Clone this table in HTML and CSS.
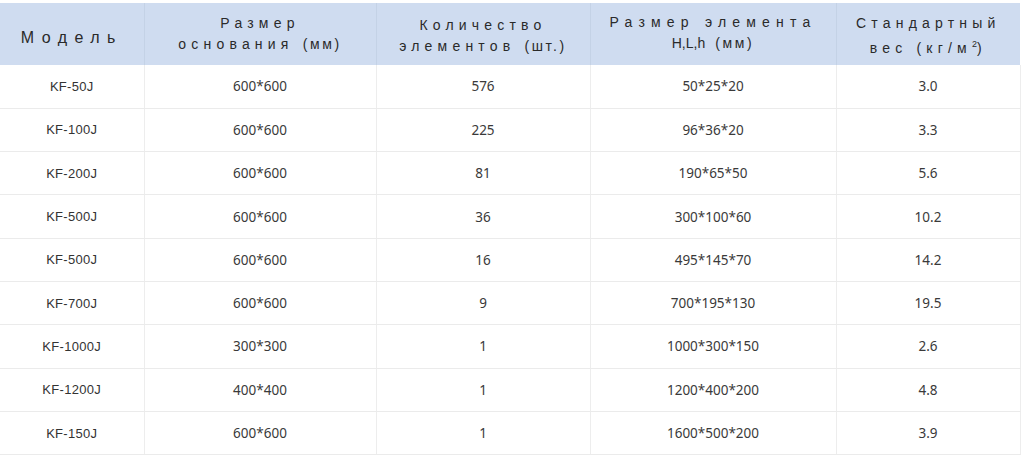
FILE: index.html
```html
<!DOCTYPE html>
<html lang="ru">
<head>
<meta charset="utf-8">
<link rel="stylesheet" href="styles.css">
</head>
<body>
<table class="spec">
  <colgroup>
    <col class="c1"><col class="c2"><col class="c3"><col class="c4"><col class="c5">
  </colgroup>
  <thead>
    <tr>
      <th class="h-model">Модель</th>
      <th>Размер<br>основания <span class="unit">(мм)</span></th>
      <th class="h-low">Количество<br>элементов <span class="unit">(шт.)</span></th>
      <th class="h-high">Размер элемента<br><span class="latin">H,L,h</span> <span class="unit">(мм)</span></th>
      <th class="h-low">Стандартный<br>вес (кг/м<sup>2</sup>)</th>
    </tr>
  </thead>
  <tbody>
    <tr><td class="model">KF-50J</td><td>600*600</td><td>576</td><td>50*25*20</td><td>3.0</td></tr>
    <tr><td class="model">KF-100J</td><td>600*600</td><td>225</td><td>96*36*20</td><td>3.3</td></tr>
    <tr><td class="model">KF-200J</td><td>600*600</td><td>81</td><td>190*65*50</td><td>5.6</td></tr>
    <tr><td class="model">KF-500J</td><td>600*600</td><td>36</td><td>300*100*60</td><td>10.2</td></tr>
    <tr><td class="model">KF-500J</td><td>600*600</td><td>16</td><td>495*145*70</td><td>14.2</td></tr>
    <tr><td class="model">KF-700J</td><td>600*600</td><td>9</td><td>700*195*130</td><td>19.5</td></tr>
    <tr><td class="model">KF-1000J</td><td>300*300</td><td>1</td><td>1000*300*150</td><td>2.6</td></tr>
    <tr><td class="model">KF-1200J</td><td>400*400</td><td>1</td><td>1200*400*200</td><td>4.8</td></tr>
    <tr><td class="model">KF-150J</td><td>600*600</td><td>1</td><td>1600*500*200</td><td>3.9</td></tr>
  </tbody>
</table>
</body>
</html>
```
FILE: styles.css
```css
html, body {
  margin: 0;
  padding: 0;
  background: #ffffff;
}
body {
  padding-top: 3px;
  font-family: "Noto Sans", "Open Sans", sans-serif;
}
.spec {
  width: 1020px;
  border-collapse: collapse;
  table-layout: fixed;
}
.c1 { width: 144px; }
.c2 { width: 232px; }
.c3 { width: 214px; }
.c4 { width: 246px; }
.c5 { width: 184px; }

.spec th {
  box-sizing: border-box;
  background: #cfdcf0;
  height: 62px;
  padding: 0;
  font-weight: 400;
  font-size: 14px;
  line-height: 21px;
  letter-spacing: 5.2px;
  color: #2a2a2a;
  text-align: center;
  vertical-align: middle;
  border-left: 1px solid #c4d2e6;
  font-family: "Liberation Sans", "Noto Sans", sans-serif;
}
.spec th:first-child { border-left: none; }
.spec th.h-model { font-size: 16px; letter-spacing: 7.4px; padding-top: 6px; }
.spec th.h-low { padding-top: 4px; }
.spec th.h-high { padding-bottom: 2px; letter-spacing: 6.2px; }
.spec th .latin { letter-spacing: 0; }
.spec th .unit { letter-spacing: 2.6px; }
.spec th sup { font-size: 9px; letter-spacing: 0; }

.spec td {
  box-sizing: border-box;
  height: 43.3px;
  padding: 0;
  font-size: 13.5px;
  color: #3a3a3a;
  text-align: center;
  vertical-align: middle;
  border-left: 1px solid #ededed;
  border-bottom: 1px solid #ebebeb;
}
.spec td.model {
  border-left: none;
  font-size: 13px;
  font-family: "Liberation Sans", sans-serif;
  color: #333;
  letter-spacing: 0.3px;
}
.spec td:last-child { border-right: 1px solid #ededed; }
```
